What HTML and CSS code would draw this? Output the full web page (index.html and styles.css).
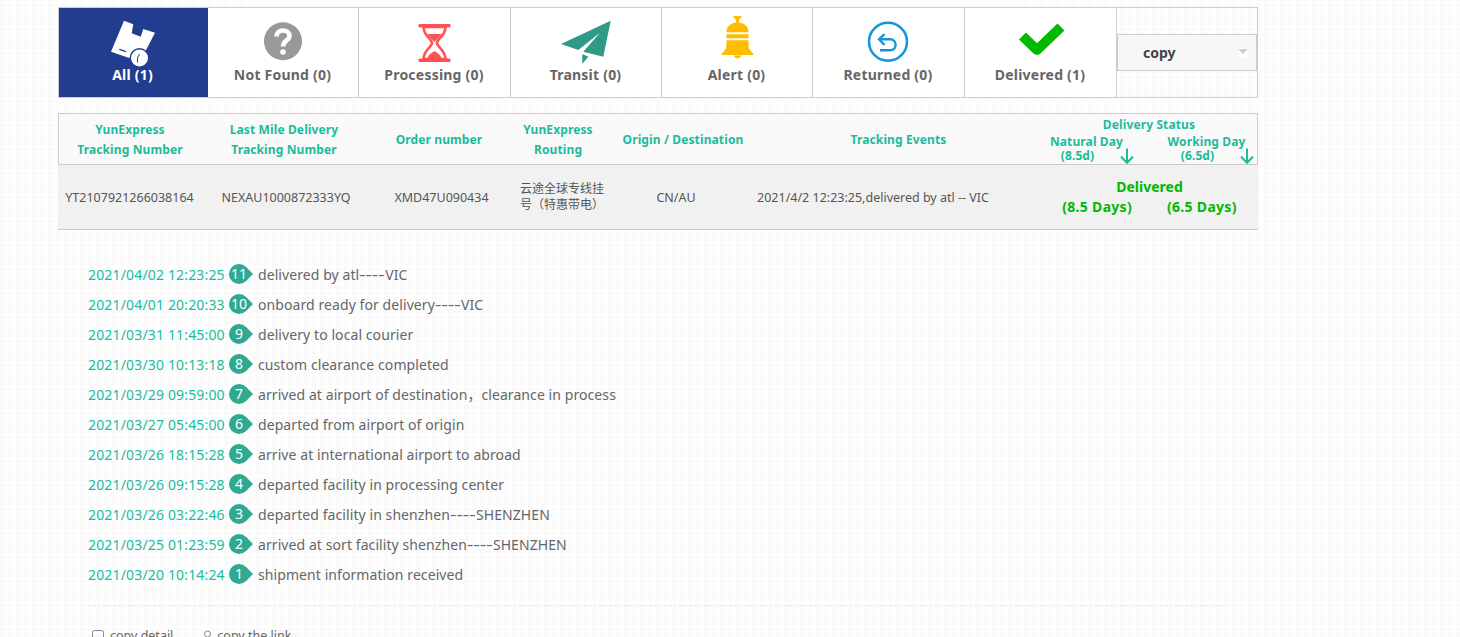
FILE: index.html
```html
<!DOCTYPE html>
<html lang="en">
<head>
<meta charset="utf-8">
<title>Tracking</title>
<link rel="stylesheet" href="styles.css">
</head>
<body>
<main class="page">
  <nav class="tabs">
    <a class="tab tab-active">
      <svg class="tab-icon" viewBox="0 0 60 52"><path fill="#fff" d="M21 4.700 30.300 8.300 28.700 17.300 37.700 20.700 40.300 13 52 16.700 37 45.700 8 35.700Z"/><path stroke="#223d90" stroke-width="1.400" d="M16.300 33.300 23 35.700"/><circle cx="36.500" cy="42" r="10" fill="#223d90"/><circle cx="36.500" cy="42" r="8.500" fill="#fff"/><path fill="none" stroke="#223d90" stroke-width="1" d="M34.500 46.500Q33.500 41.500 36.500 38"/></svg>
      <span>All (1)</span>
    </a>
    <a class="tab">
      <svg class="tab-icon" viewBox="0 0 60 52"><circle cx="30" cy="25.300" r="19" fill="#999"/><path fill="none" stroke="#fff" stroke-width="4.600" d="M23.500 20.500C23.500 12.500 36.500 12.500 36.500 20C36.500 24.500 30 24.500 30 30.500"/><circle cx="30" cy="36" r="2.800" fill="#fff"/></svg>
      <span>Not Found (0)</span>
    </a>
    <a class="tab">
      <svg class="tab-icon" viewBox="0 0 60 52"><rect x="13.500" y="8" width="32" height="3.500" rx="1" fill="#ff5252"/><rect x="13.500" y="42.500" width="32" height="3.500" rx="1" fill="#ff5252"/><path fill="none" stroke="#ff5252" stroke-width="2.600" d="M18.500 11C18.500 20 27 23 27 27 27 31 18.500 34 18.500 43H40.500C40.500 34 32 31 32 27 32 23 40.500 20 40.500 11Z"/><path fill="#ff5252" d="M22 18H37L29.500 26ZM22.500 42C24 38 28 36 29.500 35 31 36 35 38 36.500 42Z"/></svg>
      <span>Processing (0)</span>
    </a>
    <a class="tab">
      <svg class="tab-icon" viewBox="0 0 60 52"><path fill="#2f9a87" d="M54.700 4.700 5 28 22.300 34 44 16.700 27.300 35.700 47.300 40.700ZM26.300 38 32.300 40.700 26.300 48Z"/></svg>
      <span>Transit (0)</span>
    </a>
    <a class="tab">
      <svg class="tab-icon" viewBox="0 0 60 52"><path fill="#ffbc00" d="M25.500 0H35L32 4V6.500C38.500 7.500 41.500 11 41.500 16V28C41.500 33 43 34.500 46.300 37.500V39H14.700V37.500C18 34.500 19.500 33 19.500 28V16C19.500 11 22.500 7.500 29 6.500V4ZM26.500 39.500H34.500C34 41 32 42.500 30.500 42.500 29 42.500 27 41 26.500 39.500Z"/><path stroke="#fff" stroke-width="2" d="M18 17.300H43M18 23.300H43"/></svg>
      <span>Alert (0)</span>
    </a>
    <a class="tab">
      <svg class="tab-icon" viewBox="0 0 60 52"><circle cx="29" cy="25.700" r="19" fill="none" stroke="#1296db" stroke-width="2.500"/><path fill="none" stroke="#1296db" stroke-width="2.400" d="M25.500 18 20 23.300 25.500 29M20.500 23.300H31C38.500 23.300 38.500 34.300 31 34.300H21"/></svg>
      <span>Returned (0)</span>
    </a>
    <a class="tab">
      <svg class="tab-icon" viewBox="0 0 60 52"><path fill="none" stroke="#00b900" stroke-width="10" stroke-linejoin="round" d="M11.500 20 26 34 50 11"/></svg>
      <span>Delivered (1)</span>
    </a>
    <div class="tab-tools">
      <div class="copy-select">
        <span>copy</span>
        <i class="select-arrow"></i>
      </div>
    </div>
  </nav>

  <section class="grid-table">
    <div class="head-row">
      <div class="cell">YunExpress<br>Tracking Number</div>
      <div class="cell">Last Mile Delivery<br>Tracking Number</div>
      <div class="cell">Order number</div>
      <div class="cell">YunExpress<br>Routing</div>
      <div class="cell">Origin / Destination</div>
      <div class="cell">Tracking Events</div>
      <div class="cell status-head">
        <div class="status-title">Delivery Status</div>
        <div class="status-cols">
          <div class="status-col">Natural Day<small>(8.5d)</small>
            <svg class="down-arrow" viewBox="0 0 14 16"><path fill="none" stroke="#1abc9c" stroke-width="2" d="M7 0.500V15M1 8.500 7 15 13 8.500"/></svg>
          </div>
          <div class="status-col">Working Day<small>(6.5d)</small>
            <svg class="down-arrow" viewBox="0 0 14 16"><path fill="none" stroke="#1abc9c" stroke-width="2" d="M7 0.500V15M1 8.500 7 15 13 8.500"/></svg>
          </div>
        </div>
      </div>
    </div>
    <div class="body-row">
      <div class="cell">YT2107921266038164</div>
      <div class="cell">NEXAU1000872333YQ</div>
      <div class="cell">XMD47U090434</div>
      <div class="cell route">云途全球专线挂号（特惠带电）</div>
      <div class="cell">CN/AU</div>
      <div class="cell">2021/4/2 12:23:25,delivered by atl -- VIC</div>
      <div class="cell status-body">
        <div>Delivered</div>
        <div class="days"><span>(8.5 Days)</span><span>(6.5 Days)</span></div>
      </div>
    </div>
  </section>

  <ol class="timeline">
    <li class="event"><time>2021/04/02 12:23:25</time><b class="badge">11</b><span>delivered by atl<i class="dashes">----</i>VIC</span></li>
    <li class="event"><time>2021/04/01 20:20:33</time><b class="badge">10</b><span>onboard ready for delivery<i class="dashes">----</i>VIC</span></li>
    <li class="event"><time>2021/03/31 11:45:00</time><b class="badge">9</b><span>delivery to local courier</span></li>
    <li class="event"><time>2021/03/30 10:13:18</time><b class="badge">8</b><span>custom clearance completed</span></li>
    <li class="event"><time>2021/03/29 09:59:00</time><b class="badge">7</b><span>arrived at airport of destination，clearance in process</span></li>
    <li class="event"><time>2021/03/27 05:45:00</time><b class="badge">6</b><span>departed from airport of origin</span></li>
    <li class="event"><time>2021/03/26 18:15:28</time><b class="badge">5</b><span>arrive at international airport to abroad</span></li>
    <li class="event"><time>2021/03/26 09:15:28</time><b class="badge">4</b><span>departed facility in processing center</span></li>
    <li class="event"><time>2021/03/26 03:22:46</time><b class="badge">3</b><span>departed facility in shenzhen<i class="dashes">----</i>SHENZHEN</span></li>
    <li class="event"><time>2021/03/25 01:23:59</time><b class="badge">2</b><span>arrived at sort facility shenzhen<i class="dashes">----</i>SHENZHEN</span></li>
    <li class="event"><time>2021/03/20 10:14:24</time><b class="badge">1</b><span>shipment information received</span></li>
  </ol>

  <div class="actions">
    <a class="action"><svg class="action-icon" viewBox="0 0 12 12"><rect x="0.500" y="0.500" width="11" height="11" rx="2" fill="none" stroke="#888"/></svg>copy detail</a>
    <a class="action"><svg class="action-icon action-icon-small" viewBox="0 0 7 12"><circle cx="3.500" cy="4" r="3" fill="none" stroke="#888"/></svg>copy the link</a>
  </div>
</main>
</body>
</html>
```
FILE: styles.css
```css
* { box-sizing: border-box; }
html, body { margin: 0; height: 100%; overflow: hidden; }
body {
  background-color: #fff;
  background-image:
    repeating-linear-gradient(0deg, rgba(0,0,0,.012) 0 4px, transparent 4px 6px, rgba(0,0,0,.008) 6px 9px, transparent 9px 12px),
    repeating-linear-gradient(90deg, rgba(0,0,0,.012) 0 5px, transparent 5px 7px, rgba(0,0,0,.008) 7px 12px, transparent 12px 16px);
  font-family: "Noto Sans", "Noto Sans CJK SC", sans-serif;
  color: #666;
}
.page { width: 1200px; margin-left: 58px; padding-top: 7px; }

.tabs {
  display: grid;
  grid-template-columns: 149px 151px 152px 151px 151px 152px 152px 140px;
  height: 91px;
  border: 1px solid #ccc;
}
.tab {
  display: flex;
  flex-direction: column;
  align-items: center;
  padding-top: 8px;
  background: #fff;
  border-right: 1px solid #ccc;
  font-size: 14px;
  font-weight: 700;
  line-height: 14px;
  letter-spacing: .22px;
  color: #666;
}
.tab span { margin-left: -1px; }
.tab-active { background: #223d90; color: #fff; border-right-color: #223d90; }
.tab-icon { width: 60px; height: 52px; display: block; flex: none; }
.tab-tools { display: flex; align-items: center; }
.copy-select {
  display: flex;
  align-items: center;
  justify-content: space-between;
  width: 140px;
  height: 37px;
  padding: 0 8px 0 25px;
  background: #f7f7f7;
  border: 1px solid #ccc;
  font-size: 14px;
  font-weight: 700;
  color: #444;
}
.select-arrow {
  display: block;
  width: 10px;
  height: 10px;
  background: #fff;
  position: relative;
}
.select-arrow::after {
  content: "";
  position: absolute;
  left: 0;
  top: 1px;
  border: 5px solid transparent;
  border-top: 5px solid #ccc;
  border-bottom: 0;
}

.grid-table { margin-top: 15px; }
.cell { display: flex; flex-direction: column; justify-content: center; align-items: center; }
.head-row {
  display: grid;
  grid-template-columns: 142px 166px 144px 94px 156px 275px 221px;
  height: 52px;
  padding-top: 1px;
  background: #f9f9f9;
  border: 1px solid #ccc;
  font-size: 12px;
  font-weight: 700;
  line-height: 20px;
  letter-spacing: .12px;
  text-align: center;
  color: #1abc9c;
}
.status-head { line-height: 14px; justify-content: flex-start; padding-top: 3px; }
.status-title { padding-left: 5px; }
.status-cols { display: grid; grid-template-columns: 100px 100px; column-gap: 20px; margin-top: 3px; }
.status-col { position: relative; }
.status-col small { display: block; font-size: 12px; line-height: 13px; padding-right: 18px; }
.down-arrow { position: absolute; left: 83px; top: 13px; width: 14px; height: 16px; }
.body-row {
  display: grid;
  grid-template-columns: 143px 170px 141px 93px 142px 252px 259px;
  height: 65px;
  background: #f1f1f1;
  border-bottom: 1px solid #ccc;
  font-size: 12.5px;
  line-height: 16px;
  text-align: center;
  color: #555;
}
.body-row > .cell:not(.status-body):not(.route) { padding-top: 2px; }
.route { display: block; text-align: left; font-size: 12px; line-height: 16px; padding: 16px 0 0 8px; align-self: start; }
.status-body { font-size: 14px; font-weight: 700; line-height: 20px; color: #00b900; padding-left: 42px; }
.days { display: flex; gap: 35px; letter-spacing: .3px; }

.timeline { list-style: none; margin: 29px 0 0; padding: 0 0 0 30px; }
.event { display: flex; align-items: center; height: 30px; font-size: 14px; letter-spacing: .08px; }
.event time { width: 141px; color: #1abc9c; flex: none; letter-spacing: .16px; }
.dashes {
  display: inline-block;
  width: 26px;
  font-style: normal;
  letter-spacing: 0;
  transform: scaleX(1.42);
  transform-origin: left center;
}
.badge {
  position: relative;
  flex: none;
  width: 20px;
  height: 20px;
  margin-right: 9px;
  border-radius: 50%;
  background: #2fa98f;
  color: #fff;
  font-weight: 400;
  font-size: 14px;
  line-height: 20px;
  letter-spacing: 0;
  text-align: center;
}
.badge::after {
  content: "";
  position: absolute;
  z-index: -1;
  left: 17px;
  top: 3px;
  border: 7px solid transparent;
  border-left-color: #2fa98f;
  border-right: 0;
}

.actions {
  margin: 16px 30px 0;
  padding: 21px 4px 0;
  border-top: 1px dashed #e8e8e8;
  display: flex;
  gap: 31px;
  font-size: 12.500px;
  line-height: 18px;
  color: #666;
}
.action { display: flex; align-items: center; gap: 6px; }
.action-icon { width: 12px; height: 12px; flex: none; }
.action-icon-small { width: 7px; }
```
